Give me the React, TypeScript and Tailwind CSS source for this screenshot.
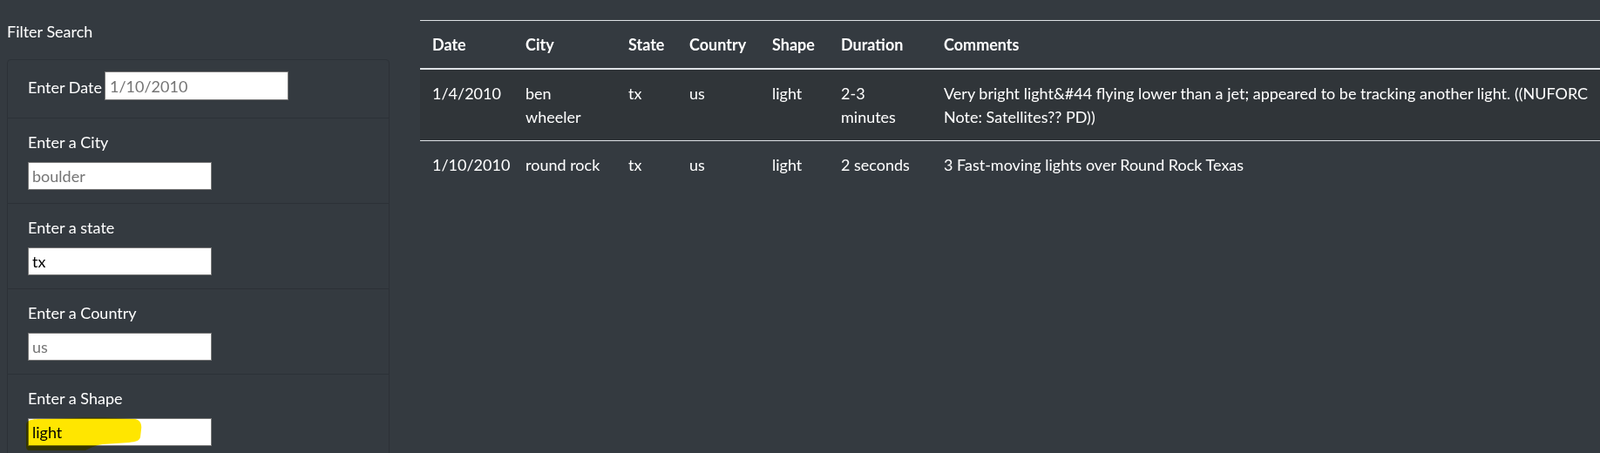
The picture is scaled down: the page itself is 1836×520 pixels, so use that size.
import React from "react";

const fields = [
  { label: "Enter a City", placeholder: "boulder" },
  { label: "Enter a state", value: "tx" },
  { label: "Enter a Country", placeholder: "us" },
  { label: "Enter a Shape", value: "light", marked: true },
];

function Highlight() {
  // yellow marker stroke painted over the screenshot
  return (
    <svg
      className="pointer-events-none absolute left-[-2px] top-[-1px] mix-blend-multiply"
      width="134"
      height="40"
      viewBox="0 0 134 40"
    >
      <path
        d="M0 9 C0 4 5 2 16 2 L52 1 C80 0 108 1 125 2 C131 3 133 8 132 14 L131 23 C130 27 126 28 118 29 L88 31 C80 32 74 35 68 38 L4 38 C1 38 0 36 0 33 Z"
        fill="#ffe600"
      />
    </svg>
  );
}

function FilterItem({ label, placeholder, value, marked }: { label: string; placeholder?: string; value?: string; marked?: boolean }) {
  return (
    <li className="border-t border-[#2c3137] px-[23px] pt-[14px] pb-[15px]">
      <label className="block">{label}</label>
      <div className="relative mt-[9px] w-[211px]">
        <input
          className="block h-[32px] w-[211px] border border-[#767676] bg-white px-[4px] text-black placeholder:text-[#757575] outline-none"
          placeholder={placeholder}
          defaultValue={value}
        />
        {marked && <Highlight />}
      </div>
    </li>
  );
}

const rows = [
  {
    date: "1/4/2010",
    city: ["ben", "wheeler"],
    state: "tx",
    country: "us",
    shape: "light",
    duration: ["2-3", "minutes"],
    comments: [
      "Very bright light&#44 flying lower than a jet; appeared to be tracking another light. ((NUFORC",
      "Note: Satellites?? PD))",
    ],
  },
  {
    date: "1/10/2010",
    city: ["round rock"],
    state: "tx",
    country: "us",
    shape: "light",
    duration: ["2 seconds"],
    comments: ["3 Fast-moving lights over Round Rock Texas"],
  },
];

function Lines({ items }: { items: string[] }) {
  return (
    <>
      {items.map((t, i) => (
        <div key={i}>{t}</div>
      ))}
    </>
  );
}

export default function App() {
  const th = "border-t border-b-2 border-[#dee2e6] px-[14px] pt-[14px] pb-[13px] text-left font-bold align-top";
  const td = "px-[14px] pt-[14px] pb-[13px] align-top whitespace-nowrap";

  return (
    <div className="flex h-[520px] w-[1836px] overflow-hidden bg-[#343a40] font-[Lato,sans-serif] text-[18px] leading-[27px] text-white">
      <aside className="w-[447px] shrink-0 pl-[8px]">
        <div className="mt-[23px]">Filter Search</div>
        <ul className="mt-[18px] rounded-[4px] border border-[#2c3137]">
          <li className="flex h-[66px] items-end px-[23px] pt-[13px] pb-[20px]">
            <label className="mb-[1px] w-[88px] shrink-0">Enter Date</label>
            <input
              className="block h-[33px] w-[211px] border border-[#767676] bg-white px-[5px] text-black placeholder:text-[#757575] outline-none"
              placeholder="1/10/2010"
            />
          </li>
          {fields.map((f) => (
            <FilterItem key={f.label} {...f} />
          ))}
        </ul>
      </aside>

      <main className="ml-[35px] flex-1">
        <table className="mt-[23px] w-[1354px] table-fixed">
          <colgroup>
            <col className="w-[107px]" />
            <col className="w-[118px]" />
            <col className="w-[70px]" />
            <col className="w-[95px]" />
            <col className="w-[79px]" />
            <col className="w-[118px]" />
            <col />
          </colgroup>
          <thead>
            <tr>
              <th className={th}>Date</th>
              <th className={th}>City</th>
              <th className={th}>State</th>
              <th className={th}>Country</th>
              <th className={th}>Shape</th>
              <th className={th}>Duration</th>
              <th className={th}>Comments</th>
            </tr>
          </thead>
          <tbody>
            {rows.map((r, i) => (
              <tr key={r.date} className={i === 0 ? "bg-[#303539]" : "border-t border-[#dee2e6]"}>
                <td className={td}>{r.date}</td>
                <td className={td}>
                  <Lines items={r.city} />
                </td>
                <td className={td}>{r.state}</td>
                <td className={td}>{r.country}</td>
                <td className={td}>{r.shape}</td>
                <td className={td}>
                  <Lines items={r.duration} />
                </td>
                <td className={td}>
                  <Lines items={r.comments} />
                </td>
              </tr>
            ))}
          </tbody>
        </table>
      </main>
    </div>
  );
}
